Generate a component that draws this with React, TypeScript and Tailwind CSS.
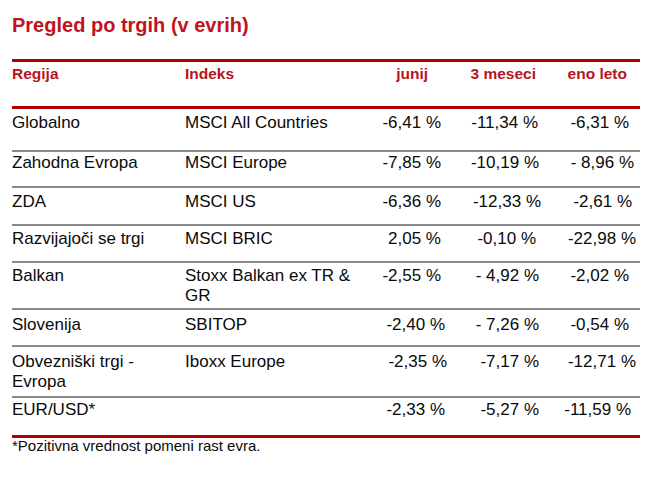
const FONT = { fontFamily: '"Liberation Sans", Arial, sans-serif' };

// vrstice tabele: višina (z robom), zgornji odmik in desni odmiki številk (kot v Wordu, ne čisto poravnano)
const ROWS = [
  { regija: 'Globalno', indeks: 'MSCI All Countries', v: ['-6,41 %', '-11,34 %', '-6,31 %'], h: 'h-[43px]', pt: 'pt-[4px]', pr: ['pr-[7px]', 'pr-[7px]', 'pr-[11px]'] },
  { regija: 'Zahodna Evropa', indeks: 'MSCI Europe', v: ['-7,85 %', '-10,19 %', '- 8,96 %'], h: 'h-[36px]', pt: 'pt-[1px]', pr: ['pr-[7px]', 'pr-[6px]', 'pr-[6px]'] },
  { regija: 'ZDA', indeks: 'MSCI US', v: ['-6,36 %', '-12,33 %', '-2,61 %'], h: 'h-[38px]', pt: 'pt-[4px]', pr: ['pr-[7px]', 'pr-[4px]', 'pr-[8px]'] },
  { regija: 'Razvijajoči se trgi', indeks: 'MSCI BRIC', v: ['2,05 %', '-0,10 %', '-22,98 %'], h: 'h-[37px]', pt: 'pt-[3px]', pr: ['pr-[7px]', 'pr-[9px]', 'pr-[4px]'] },
  { regija: 'Balkan', indeks: 'Stoxx Balkan ex TR & GR', v: ['-2,55 %', '- 4,92 %', '-2,02 %'], h: 'h-[47px]', pt: 'pt-[3px]', pr: ['pr-[7px]', 'pr-[6px]', 'pr-[11px]'] },
  { regija: 'Slovenija', indeks: 'SBITOP', v: ['-2,40 %', '- 7,26 %', '-0,54 %'], h: 'h-[37px]', pt: 'pt-[5px]', pr: ['pr-[3px]', 'pr-[6px]', 'pr-[11px]'] },
  { regija: 'Obvezniški trgi - Evropa', indeks: 'Iboxx Europe', v: ['-2,35 %', '-7,17 %', '-12,71 %'], h: 'h-[51px]', pt: 'pt-[5px]', pr: ['pr-[1px]', 'pr-[6px]', 'pr-[4px]'] },
  { regija: 'EUR/USD*', indeks: '', v: ['-2,33 %', '-5,27 %', '-11,59 %'], h: 'h-[40px]', pt: 'pt-[2px]', pr: ['pr-[3px]', 'pr-[6px]', 'pr-[9px]'] },
];

const GRID = 'grid grid-cols-[173px_187px_76px_97px_95px]';

export default function App() {
  return (
    <div className="w-[648px] h-[483px] bg-white pl-[12px] pt-[13px]" style={FONT}>
      <h1 className="text-[20px] leading-[24px] font-bold text-[#c0141c]">Pregled po trgih (v evrih)</h1>

      <div className="mt-[22px] w-[628px] border-t-[3px] border-[#b00000]">
        {/* glava */}
        <div className={`${GRID} h-[47px] pt-[2px] border-b-[3px] border-[#b00000] text-[15.5px] leading-[20px] font-bold text-[#b8141c]`}>
          <div>Regija</div>
          <div>Indeks</div>
          <div className="text-right pr-[20px]">junij</div>
          <div className="text-right pr-[9px]">3 meseci</div>
          <div className="text-right pr-[13px]">eno leto</div>
        </div>

        {ROWS.map((r, i) => (
          <div
            key={r.regija}
            className={`${GRID} ${r.h} ${r.pt} text-[17px] leading-[20px] text-[#0a0a0a] ${
              i === ROWS.length - 1 ? 'border-b-[3px] border-[#b00000]' : 'border-b-2 border-[#8a8a8a]'
            }`}
          >
            <div className="pr-[8px]">{r.regija}</div>
            <div className="pr-[4px]">{r.indeks}</div>
            {r.v.map((val, j) => (
              <div key={j} className={`text-right whitespace-nowrap ${r.pr[j]}`}>{val}</div>
            ))}
          </div>
        ))}
      </div>

      <p className="text-[15px] leading-[16px] text-[#0a0a0a]">*Pozitivna vrednost pomeni rast evra.</p>
    </div>
  );
}
